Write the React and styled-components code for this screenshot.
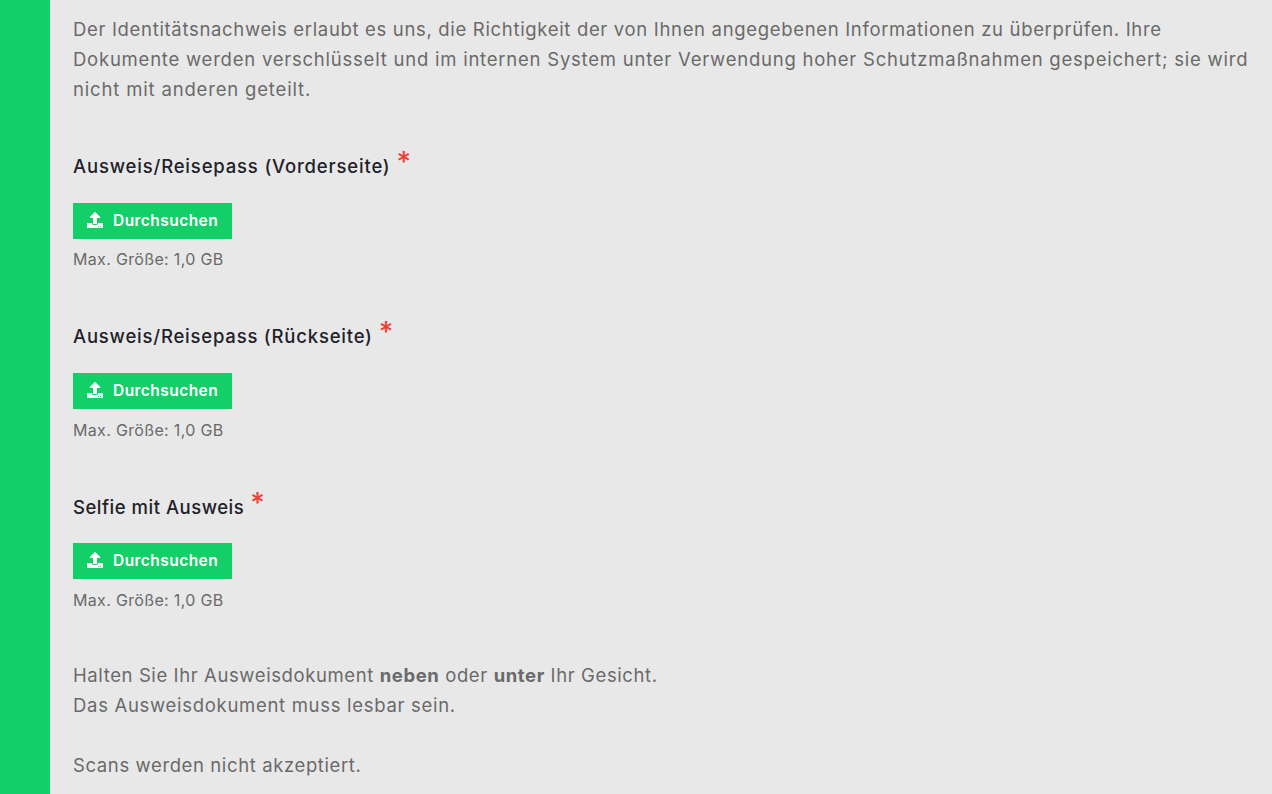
import React from "react";
import styled, { createGlobalStyle } from "styled-components";
import { FaUpload } from "react-icons/fa";

const Global = createGlobalStyle`
  html, body { margin: 0; padding: 0; height: 794px; overflow: hidden; background: #e8e8e8; }
`;
const Page = styled.div`
  display: flex;
  height: 794px;
  overflow: hidden;
  background: #e8e8e8;
  font-family: Inter, "Noto Sans", sans-serif;
`;
const Stripe = styled.div`
  flex: 0 0 50px;
  background: #13cf67;
`;
const Content = styled.main`
  flex: 1;
  padding: 14px 23px 0;
  min-width: 0;
`;
const Paragraph = styled.p`
  margin: ${(p) => p.$margin || "0"};
  font-size: 18.5px;
  line-height: 30px;
  color: #6a6a6a;
  white-space: nowrap;
  strong { font-weight: 700; }
`;
const Line = styled.span`
  display: block;
  min-height: 30px;
  letter-spacing: ${(p) => p.$spacing}px;
`;
const FieldList = styled.div`
  display: flex;
  flex-direction: column;
  gap: 4px;
`;
const Field = styled.section`
  display: flex;
  flex-direction: column;
  align-items: flex-start;
  height: 166px;
`;
const Label = styled.label`
  display: flex;
  align-items: flex-start;
  box-sizing: border-box;
  height: 24px;
  padding-top: ${(p) => p.$nudge}px;
  font-size: 18.5px;
  line-height: 24px;
  font-weight: 450;
  letter-spacing: ${(p) => p.$spacing}px;
  color: #1f2228;
`;
const Star = styled.span`
  margin-left: 6px;
  margin-top: -4px;
  font-size: 28px;
  line-height: 24px;
  font-weight: 500;
  letter-spacing: 0;
  color: #ee4035;
`;
const UploadButton = styled.button`
  display: flex;
  align-items: center;
  gap: 10px;
  width: 159px;
  height: 36px;
  margin-top: 25px;
  padding: 0 0 0 14px;
  border: 0;
  background: #13cf67;
  color: #fff;
  font: 600 15.5px/20px Inter, "Noto Sans", sans-serif;
  letter-spacing: 0.45px;
  white-space: nowrap;
`;
const ButtonIcon = styled(FaUpload)`
  flex: none;
  margin-top: -2px;
`;
const Hint = styled.div`
  margin-top: ${(p) => p.$top}px;
  font-size: 16px;
  line-height: 22px;
  letter-spacing: 0.33px;
  color: #6a6a6a;
`;

const fields = [
  { label: "Ausweis/Reisepass (Vorderseite)", spacing: 0.82, nudge: 0, hintTop: 9 },
  { label: "Ausweis/Reisepass (Rückseite)", spacing: 0.79, nudge: 0, hintTop: 10 },
  { label: "Selfie mit Ausweis", spacing: 0.51, nudge: 1, hintTop: 10 },
];

export default function App() {
  return (
    <Page>
      <Global />
      <Stripe />
      <Content>
        <Paragraph $margin="0 0 50px">
          <Line $spacing={0.67}>Der Identitätsnachweis erlaubt es uns, die Richtigkeit der von Ihnen angegebenen Informationen zu überprüfen. Ihre</Line>
          <Line $spacing={0.77}>Dokumente werden verschlüsselt und im internen System unter Verwendung hoher Schutzmaßnahmen gespeichert; sie wird</Line>
          <Line $spacing={0.83}>nicht mit anderen geteilt.</Line>
        </Paragraph>
        <FieldList>
          {fields.map((f) => (
            <Field key={f.label}>
              <Label $spacing={f.spacing} $nudge={f.nudge}>
                {f.label}
                <Star>*</Star>
              </Label>
              <UploadButton>
                <ButtonIcon size={16} />
                Durchsuchen
              </UploadButton>
              <Hint $top={f.hintTop}>Max. Größe: 1,0 GB</Hint>
            </Field>
          ))}
        </FieldList>
        <Paragraph>
          <Line $spacing={0.6}>
            Halten Sie Ihr Ausweisdokument <strong>neben</strong> oder <strong>unter</strong> Ihr Gesicht.
          </Line>
          <Line $spacing={0.7}>Das Ausweisdokument muss lesbar sein.</Line>
          <Line $spacing={0.7} />
          <Line $spacing={0.61}>Scans werden nicht akzeptiert.</Line>
        </Paragraph>
      </Content>
    </Page>
  );
}
